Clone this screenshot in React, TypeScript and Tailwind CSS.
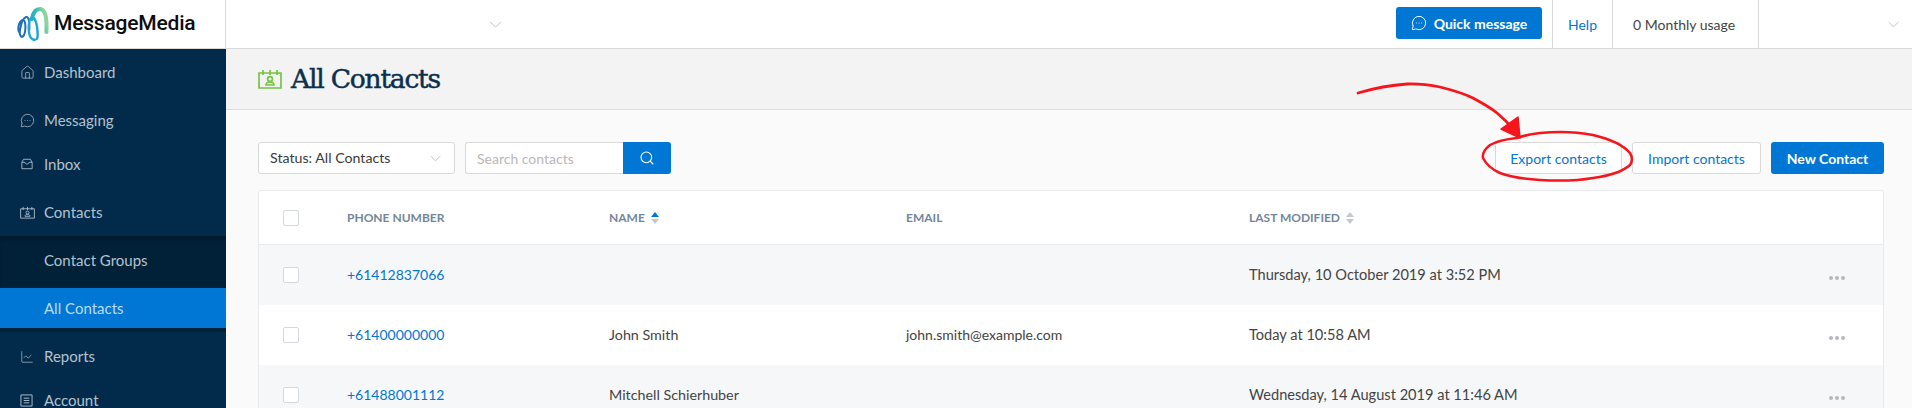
import React from "react";
import { House, MessageCircleMore, ChartLine, Search } from "lucide-react";

const Chevron = ({ className = "" }: { className?: string }) => (
  <svg viewBox="0 0 14 8" className={className} fill="none" stroke="currentColor" strokeWidth="1">
    <path d="M1 1l6 6 6-6" />
  </svg>
);

const ContactCal = ({ className = "", sw = 1.3 }: { className?: string; sw?: number }) => (
  <svg viewBox="0 0 24 20" className={className} fill="none" stroke="currentColor" strokeWidth={sw}>
    <path d="M1 4h22v15H1z" />
    <path d="M5 1v5M12 1v5M19 1v5" />
    <circle cx="12" cy="10" r="2.4" />
    <path d="M8 16c0-4 8-4 8 0z" />
  </svg>
);

const InboxIcon = ({ className = "" }: { className?: string }) => (
  <svg viewBox="0 0 14 14" className={className} fill="none" stroke="currentColor" strokeWidth="1">
    <path d="M3 1.5h8l2 3.5v7.5H1V5z" />
    <path d="M1 5h3.5c.3 1.5 1.3 2 2.5 2s2.2-.5 2.5-2H13" />
  </svg>
);

const AccountIcon = ({ className = "" }: { className?: string }) => (
  <svg viewBox="0 0 14 14" className={className} fill="none" stroke="currentColor" strokeWidth="1">
    <path d="M1 1h12v12H1z" />
    <path d="M4 4.5h6M4 7h6M4 9.5h6" />
  </svg>
);

const Logo = () => (
  <svg viewBox="0 0 33 34" className="w-[33px] h-[34px] shrink-0">
    <defs>
      <linearGradient id="lg" x1="0" y1="1" x2="1" y2="0.6">
        <stop offset="0" stopColor="#1aa6d6" />
        <stop offset="0.55" stopColor="#2bbfb6" />
        <stop offset="1" stopColor="#8fd49a" />
      </linearGradient>
    </defs>
    <path d="M2 25c-2-5 1-12 4-12s3 11 1 15-5 1-4-5 3-12 6-13 4 7 3 15" fill="none" stroke="#1e6fb6" strokeWidth="2" strokeLinecap="round" />
    <path d="M19 32c2 0 2-5 1-12-1-7-3-11-6-9-3 3-3 16 0 20 2 2 4 2 5 1" fill="none" stroke="#1ca6d4" strokeWidth="2.4" />
    <path d="M15 12c1-6 4-10 8-10s6 6 6.500 13c.2 4 0 8 0 10" fill="none" stroke="url(#lg)" strokeWidth="4" strokeLinecap="round" />
  </svg>
);

const SortIcon = ({ active = false }: { active?: boolean }) => (
  <svg viewBox="0 0 8 12" className="w-2 h-3 ml-[6px]">
    <path d="M4 0l4 5H0z" fill={active ? "#0077d4" : "#c4c8cc"} />
    <path d="M4 12L0 7h8z" fill="#c4c8cc" />
  </svg>
);

const NavItem = ({ label, icon, cls }: { label: string; icon: React.ReactNode; cls: string }) => (
  <div className={`flex items-center pl-5 text-[#b4c2cd] text-[15px] ${cls}`}>
    <span className="w-6 flex items-center">{icon}</span>
    <span>{label}</span>
  </div>
);

const rows = [
  { phone: "+61412837066", name: "", email: "", mod: "Thursday, 10 October 2019 at 3:52 PM", bg: "bg-[#f6f7f9]" },
  { phone: "+61400000000", name: "John Smith", email: "john.smith@example.com", mod: "Today at 10:58 AM", bg: "bg-white" },
  { phone: "+61488001112", name: "Mitchell Schierhuber", email: "", mod: "Wednesday, 14 August 2019 at 11:46 AM", bg: "bg-[#f6f7f9]" },
];

const Checkbox = () => <span className="block w-4 h-4 bg-white border border-[#d5d8dc] rounded-[2px]" />;

const gridCols = "grid grid-cols-[64px_262px_297px_343px_580px_64px] items-center pl-[24px]";

export default function App() {
  return (
    <div className="relative h-[408px] w-[1912px] overflow-hidden flex flex-col bg-[#fafafa] text-[14px] text-[#333] font-['Lato','Noto_Sans',sans-serif]">
      {/* Header */}
      <header className="h-[49px] shrink-0 flex bg-white border-b border-[#d9d9d9]">
        <div className="w-[226px] shrink-0 flex items-center gap-[4px] pl-[17px] border-r border-[#d9d9d9]">
          <Logo />
          <span className="font-['Roboto',sans-serif] font-medium text-[21px] tracking-[-0.2px] text-[#0d0d0d]">MessageMedia</span>
        </div>
        <div className="flex-1 flex items-center">
          <Chevron className="w-[13px] h-[7px] ml-[263px] text-[#b5b5b5]" />
          <div className="ml-auto flex items-stretch h-full">
            <div className="flex items-center pr-[10px]">
              <button className="w-[146px] h-[32px] mb-[2px] rounded-[3px] bg-[#0077d4] text-white font-bold text-[14px] flex items-center justify-center gap-[7px]">
                <MessageCircleMore className="w-[16px] h-[16px]" strokeWidth={1.4} />
                Quick message
              </button>
            </div>
            <div className="w-[60px] flex items-center justify-center border-l border-[#d9d9d9] text-[#0077d4]">Help</div>
            <div className="w-[147px] flex items-center pl-[20px] border-l border-r border-[#d9d9d9] text-[#444]">0 Monthly usage</div>
            <div className="w-[153px] flex items-center justify-end pr-[13px]">
              <Chevron className="w-[11px] h-[7px] text-[#b5b5b5]" />
            </div>
          </div>
        </div>
      </header>

      <div className="flex-1 flex min-h-0">
        {/* Sidebar */}
        <aside className="w-[226px] shrink-0 bg-[#022b4b] flex flex-col">
          <NavItem label="Dashboard" cls="h-[47px] shrink-0" icon={<House className="w-[15px] h-[15px]" strokeWidth={1.2} />} />
          <NavItem label="Messaging" cls="h-[48px] shrink-0" icon={<MessageCircleMore className="w-[15px] h-[15px]" strokeWidth={1.2} />} />
          <NavItem label="Inbox" cls="h-[40px] shrink-0" icon={<InboxIcon className="w-[12px] h-[12px] ml-[1px]" />} />
          <NavItem label="Contacts" cls="h-[52px] shrink-0 pt-[4px]" icon={<ContactCal className="w-[15px] h-[13px]" sw={1.4} />} />
          <div className="h-[52px] shrink-0 flex items-center pl-[44px] pb-[4px] bg-[#012138] text-[#b4c2cd] text-[15px] shadow-[inset_0_5px_5px_-3px_rgba(0,0,0,0.3)]">Contact Groups</div>
          <div className="h-[40px] shrink-0 flex items-center pl-[44px] bg-[#0077d4] text-[#b9dcf5] text-[15px]">All Contacts</div>
          <div className="h-[4px] shrink-0 bg-[#012138]" />
          <NavItem label="Reports" cls="h-[48px] shrink-0 pt-[1px]" icon={<ChartLine className="w-[14px] h-[14px]" strokeWidth={1.2} />} />
          <NavItem label="Account" cls="h-[40px] shrink-0 pt-[1px]" icon={<AccountIcon className="w-[13px] h-[13px]" />} />
        </aside>

        {/* Main */}
        <main className="flex-1 min-w-0 flex flex-col">
          <div className="h-[61px] shrink-0 flex items-center pl-[32px] gap-[9px] bg-[#f3f3f3] border-b border-[#dedede]">
            <ContactCal className="w-[24px] h-[20px] text-[#76c442]" sw={1.7} />
            <h1 className="font-['DejaVu_Serif','Liberation_Serif',serif] text-[#0d2f4f] text-[26.5px] tracking-[-1.2px] leading-none [-webkit-text-stroke:0.5px_#0d2f4f]">All Contacts</h1>
          </div>

          <div className="flex-1 pl-[32px] pr-[28px] pt-[32px]">
            {/* Toolbar */}
            <div className="flex items-center h-[32px]">
              <div className="w-[197px] h-[32px] flex items-center justify-between pl-[11px] pr-[13px] bg-white border border-[#d9d9d9] rounded-[3px]">
                <span className="text-[#3a3a3a] text-[14.2px]">Status: All Contacts</span>
                <Chevron className="w-[11px] h-[7px] text-[#b5b5b5]" />
              </div>
              <div className="ml-[10px] flex h-[32px]">
                <div className="w-[158px] flex items-center pl-[11px] bg-white border border-r-0 border-[#d9d9d9] rounded-l-[3px] text-[#b8b8b8]">Search contacts</div>
                <div className="w-[48px] flex items-center justify-center bg-[#0077d4] rounded-r-[3px] text-white">
                  <Search className="w-[16px] h-[16px]" strokeWidth={1.6} />
                </div>
              </div>
              <div className="ml-auto flex gap-[10px]">
                <button className="w-[127px] h-[32px] bg-white border border-[#d9d9d9] rounded-[3px] text-[#0077d4]">Export contacts</button>
                <button className="w-[129px] h-[32px] bg-white border border-[#d9d9d9] rounded-[3px] text-[#0077d4]">Import contacts</button>
                <button className="w-[113px] h-[32px] bg-[#0077d4] rounded-[3px] text-white font-bold">New Contact</button>
              </div>
            </div>

            {/* Table */}
            <div className="mt-[16px] bg-white border border-[#e8eaee] rounded-t-[3px]">
              <div className={`${gridCols} h-[54px] border-b border-[#e8eaee] text-[#74879a] font-bold text-[12px]`}>
                <Checkbox />
                <span>PHONE NUMBER</span>
                <span className="flex items-center">NAME<SortIcon active /></span>
                <span>EMAIL</span>
                <span className="flex items-center">LAST MODIFIED<SortIcon /></span>
                <span />
              </div>
              {rows.map((r) => (
                <div key={r.phone} className={`${gridCols} h-[60px] ${r.bg} text-[#444]`}>
                  <Checkbox />
                  <span className="text-[#0077d4] -mt-[1px]">{r.phone}</span>
                  <span className="text-[14.3px] -mt-[1px]">{r.name}</span>
                  <span className="-mt-[1px]">{r.email}</span>
                  <span className="text-[14.6px] -mt-[1px]">{r.mod}</span>
                  <span className="flex gap-[2px] mt-[5px]">
                    <i className="block w-[4px] h-[4px] rounded-full bg-[#b5b9bd]" />
                    <i className="block w-[4px] h-[4px] rounded-full bg-[#b5b9bd]" />
                    <i className="block w-[4px] h-[4px] rounded-full bg-[#b5b9bd]" />
                  </span>
                </div>
              ))}
            </div>
          </div>
        </main>
      </div>

      {/* Hand-drawn red annotation over the page */}
      <svg className="absolute left-0 top-0 w-[1912px] h-[408px] pointer-events-none" viewBox="0 0 1912 408" fill="none">
        <path d="M1358 93C1375 88 1392 85 1407 84C1420 83.500 1430 85 1440 87C1452 90 1463 93 1473 98C1482 103 1490 107 1497 113C1503 118 1508 123 1513 129" stroke="#f6151b" strokeWidth="2.8" strokeLinecap="round" />
        <path d="M1501 129L1518 117L1520 138Z" fill="#f6151b" stroke="#f6151b" strokeWidth="1.5" strokeLinejoin="round" />
        <path d="M1517 138C1525 135 1532 134 1540 133C1560 131 1578 132 1593 135C1610 139 1624 146 1630 153C1633 158 1632 162 1630 165C1622 172 1608 176 1593 178C1576 181 1558 181 1540 180C1525 179 1510 177 1500 173C1491 169 1486 164 1483 158C1482 153 1485 149 1490 145C1497 141 1507 139 1517 138" stroke="#f6151b" strokeWidth="2.5" strokeLinecap="round" />
      </svg>
    </div>
  );
}
